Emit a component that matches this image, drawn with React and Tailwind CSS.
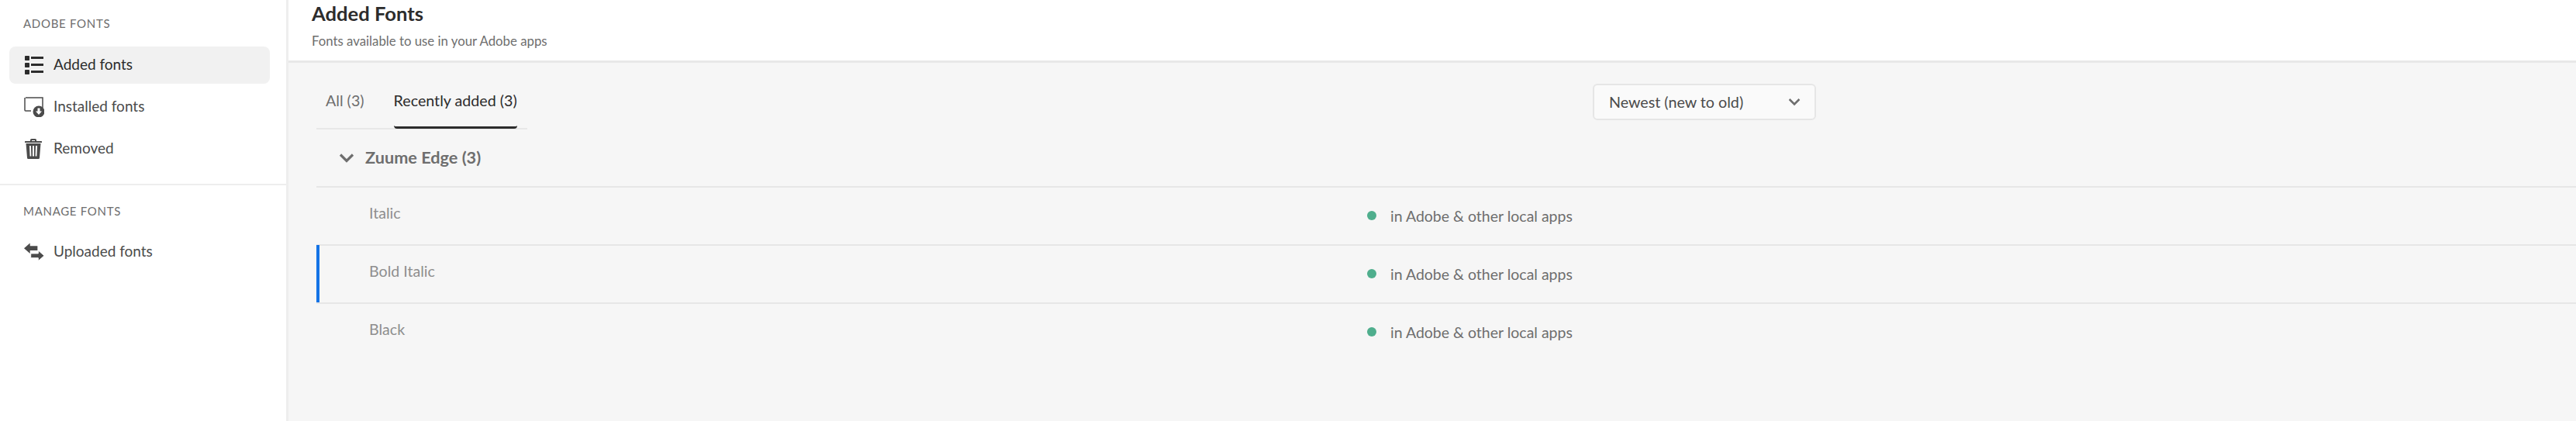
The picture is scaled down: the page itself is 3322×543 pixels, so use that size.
import React from "react";

const font = "font-['Lato','Noto_Sans',sans-serif]";

function ListIcon() {
  return (
    <svg width="26" height="26" viewBox="0 0 26 26" fill="#2c2c2c">
      <rect x="1" y="1" width="6" height="6" rx="0.8" />
      <rect x="1" y="10" width="6" height="6" rx="0.8" />
      <rect x="1" y="19" width="6" height="6" rx="0.8" />
      <rect x="9" y="2" width="16" height="3" />
      <rect x="9" y="11" width="16" height="3" />
      <rect x="9" y="20" width="16" height="3" />
    </svg>
  );
}

function InstalledIcon() {
  return (
    <svg width="26" height="26" viewBox="0 0 26 26">
      <path d="M2 1h22v13M9 18H2a1 1 0 0 1-1-1V1" fill="none" stroke="#4b4b4b" strokeWidth="1.5" />
      <circle cx="19" cy="19" r="7.500" fill="#4b4b4b" />
      <path d="M17.500 14.500h3v4h2.500l-4 4.500-4-4.500h2.500z" fill="#fff" />
    </svg>
  );
}

function TrashIcon() {
  return (
    <svg width="24" height="26" viewBox="0 0 24 26" fill="#4b4b4b">
      <path d="M8 3V1.500A1.500 1.500 0 0 1 9.500 0h5A1.500 1.500 0 0 1 16 1.500V3h6.500a.5.5 0 0 1 .5.5V5H1V3.500a.5.5 0 0 1 .5-.5zM10 3h4V2h-4z" />
      <path d="M2.500 6h19l-1.500 18.500a1.500 1.500 0 0 1-1.500 1.500h-13A1.500 1.500 0 0 1 4 24.500zM7 9l.6 13.500h1.800L9 9zm4 0v13.500h2V9zm4 0-.4 13.500h1.800L17 9z" fillRule="evenodd" />
    </svg>
  );
}

function SwapIcon() {
  return (
    <svg width="28" height="24" viewBox="0 0 28 24" fill="#4b4b4b">
      <path d="M8 0v4h10v6H8v4L0 7z" />
      <path d="M19 10v4H9v6h10v4l8-7z" stroke="#fff" strokeWidth="1" />
    </svg>
  );
}

function Chevron({ w = 20, color = "#6e6e6e" }) {
  return (
    <svg width={w} height={w * 0.65} viewBox="0 0 20 13" fill="none">
      <path d="M2 2.500l8 8 8-8" stroke={color} strokeWidth="3.200" />
    </svg>
  );
}

function NavItem({ icon, label, active }) {
  return (
    <div className={`flex items-center h-12 ml-3 mr-[21px] pl-[19px] gap-[11px] rounded-lg text-[19px] ${active ? "bg-[#f1f1f1] text-[#2c2c2c]" : "text-[#4b4b4b]"}`}>
      <span className="w-[27px] flex justify-start">{icon}</span>
      <span className="-mt-px">{label}</span>
    </div>
  );
}

function FontRow({ name, selected }) {
  return (
    <div className="flex h-[75px] border-t-2 border-[#e6e6e6] relative">
      {selected && <div className="absolute left-0 -top-px bottom-0 w-1 bg-[#1473e6]" />}
      <div className="w-[1355px] pl-[68px] pt-[21px] text-[19.6px] leading-6 text-[#8e8e8e]">{name}</div>
      <div className="flex items-center gap-[18px] h-[73px] text-[19.5px] text-[#6e6e6e]">
        <span className="w-3 h-3 rounded-full bg-[#4fae8d] -mt-px" />
        <span>in Adobe &amp; other local apps</span>
      </div>
    </div>
  );
}

export default function App() {
  return (
    <div className={`flex w-[3322px] h-[543px] overflow-hidden bg-white ${font}`}>
      <aside className="w-[372px] shrink-0 border-r-[3px] border-[#eeeeee] bg-white">
        <div className="pl-[30px] pt-[21px] pb-[20px] text-[15px] leading-[19px] tracking-[0.7px] text-[#6e6e6e]">ADOBE FONTS</div>
        <div className="flex flex-col gap-[6px]">
          <NavItem active label="Added fonts" icon={<ListIcon />} />
          <NavItem label="Installed fonts" icon={<InstalledIcon />} />
          <NavItem label="Removed" icon={<TrashIcon />} />
        </div>
        <div className="mt-[21px] border-t-2 border-[#eeeeee]" />
        <div className="pl-[30px] pt-[24px] pb-[19px] text-[15px] leading-[19px] tracking-[0.7px] text-[#6e6e6e]">MANAGE FONTS</div>
        <NavItem label="Uploaded fonts" icon={<SwapIcon />} />
      </aside>

      <main className="flex-1 min-w-0 bg-[#f6f6f6]">
        <header className="h-[81px] bg-white border-b-[3px] border-[#e8e8e8] pl-[30px]">
          <div className="pt-px text-[25.6px] leading-[32px] font-bold text-[#2c2c2c]">Added Fonts</div>
          <div className="mt-[10px] text-[16.8px] leading-5 text-[#6e6e6e]">Fonts available to use in your Adobe apps</div>
        </header>

        <div className="pl-9">
          <div className="flex items-start h-[86px]">
            <div className="flex w-[272px] h-[86px] border-b-2 border-[#e8e8e8] pl-3 pt-[37px] gap-[38px] text-[19.7px] leading-6">
              <span className="text-[#6e6e6e]">All (3)</span>
              <span className="text-[#2c2c2c] h-[48px] border-b-[3px] border-[#2c2c2c] rounded-b-sm">Recently added (3)</span>
            </div>
            <div className="mt-[27px] ml-[1374px] w-[288px] h-[47px] flex items-center justify-between pl-[19px] pr-[18px] rounded-md border-2 border-[#e6e6e6] bg-[#fafafa] text-[19.7px] text-[#4b4b4b]">
              <span>Newest (new to old)</span>
              <Chevron w={16} />
            </div>
          </div>
          <div className="flex items-center h-[73px] pl-[29px] gap-[14px] text-[21.7px] font-bold text-[#6e6e6e]">
            <Chevron />
            <span>Zuume Edge (3)</span>
          </div>
          <FontRow name="Italic" />
          <FontRow name="Bold Italic" selected />
          <FontRow name="Black" />
        </div>
      </main>
    </div>
  );
}
